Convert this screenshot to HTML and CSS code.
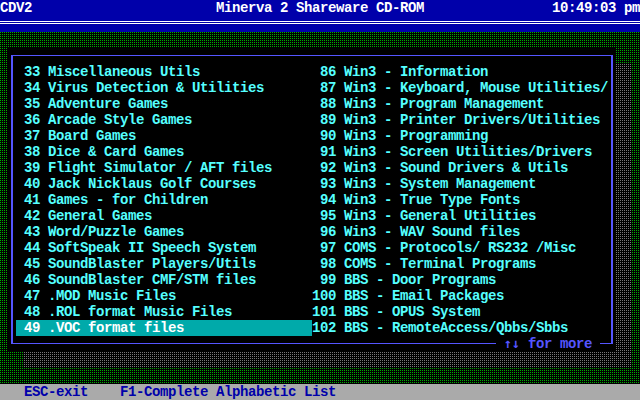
FILE: index.html
```html
<!DOCTYPE html>
<html lang="en">
<head>
<meta charset="utf-8">
<title>Minerva 2 Shareware CD-ROM</title>
<link rel="stylesheet" href="styles.css">
</head>
<body>
<div class="screen">
  <header class="titlebar">
    <span class="app">CDV2</span>
    <span class="title">Minerva 2 Shareware CD-ROM</span>
    <span class="clock">10:49:03 pm</span>
  </header>
  <div class="rule"></div>
  <main class="desktop">
    <section class="window">
      <div class="frame">
        <ul class="list">
          <li class="item"><span class="num">33</span><span class="label">Miscellaneous Utils</span></li>
          <li class="item"><span class="num">34</span><span class="label">Virus Detection &amp; Utilities</span></li>
          <li class="item"><span class="num">35</span><span class="label">Adventure Games</span></li>
          <li class="item"><span class="num">36</span><span class="label">Arcade Style Games</span></li>
          <li class="item"><span class="num">37</span><span class="label">Board Games</span></li>
          <li class="item"><span class="num">38</span><span class="label">Dice &amp; Card Games</span></li>
          <li class="item"><span class="num">39</span><span class="label">Flight Simulator / AFT files</span></li>
          <li class="item"><span class="num">40</span><span class="label">Jack Nicklaus Golf Courses</span></li>
          <li class="item"><span class="num">41</span><span class="label">Games - for Children</span></li>
          <li class="item"><span class="num">42</span><span class="label">General Games</span></li>
          <li class="item"><span class="num">43</span><span class="label">Word/Puzzle Games</span></li>
          <li class="item"><span class="num">44</span><span class="label">SoftSpeak II Speech System</span></li>
          <li class="item"><span class="num">45</span><span class="label">SoundBlaster Players/Utils</span></li>
          <li class="item"><span class="num">46</span><span class="label">SoundBlaster CMF/STM files</span></li>
          <li class="item"><span class="num">47</span><span class="label">.MOD Music Files</span></li>
          <li class="item"><span class="num">48</span><span class="label">.ROL format Music Files</span></li>
          <li class="item sel"><span class="num">49</span><span class="label">.VOC format files</span></li>
          <li class="item"><span class="num">86</span><span class="label">Win3 - Information</span></li>
          <li class="item"><span class="num">87</span><span class="label">Win3 - Keyboard, Mouse Utilities/</span></li>
          <li class="item"><span class="num">88</span><span class="label">Win3 - Program Management</span></li>
          <li class="item"><span class="num">89</span><span class="label">Win3 - Printer Drivers/Utilities</span></li>
          <li class="item"><span class="num">90</span><span class="label">Win3 - Programming</span></li>
          <li class="item"><span class="num">91</span><span class="label">Win3 - Screen Utilities/Drivers</span></li>
          <li class="item"><span class="num">92</span><span class="label">Win3 - Sound Drivers &amp; Utils</span></li>
          <li class="item"><span class="num">93</span><span class="label">Win3 - System Management</span></li>
          <li class="item"><span class="num">94</span><span class="label">Win3 - True Type Fonts</span></li>
          <li class="item"><span class="num">95</span><span class="label">Win3 - General Utilities</span></li>
          <li class="item"><span class="num">96</span><span class="label">Win3 - WAV Sound files</span></li>
          <li class="item"><span class="num">97</span><span class="label">COMS - Protocols/ RS232 /Misc</span></li>
          <li class="item"><span class="num">98</span><span class="label">COMS - Terminal Programs</span></li>
          <li class="item"><span class="num">99</span><span class="label">BBS - Door Programs</span></li>
          <li class="item"><span class="num">100</span><span class="label">BBS - Email Packages</span></li>
          <li class="item"><span class="num">101</span><span class="label">BBS - OPUS System</span></li>
          <li class="item"><span class="num">102</span><span class="label">BBS - RemoteAccess/Qbbs/Sbbs</span></li>
        </ul>
        <div class="more"><span class="arrows">↑↓</span><span class="more-text"> for more</span></div>
      </div>
    </section>
  </main>
  <footer class="keys">
    <span>ESC-exit</span>
    <span>F1-Complete Alphabetic List</span>
  </footer>
</div>
</body>
</html>
```
FILE: styles.css
```css
html, body {
  margin: 0;
  padding: 0;
  background: #000;
}

.screen {
  width: 640px;
  height: 400px;
  overflow: hidden;
  font-family: "Liberation Mono", "DejaVu Sans Mono", monospace;
  font-size: 14px;
  letter-spacing: -0.4px;
  font-weight: bold;
  line-height: 16px;
}

.titlebar {
  height: 16px;
  background: #0000aa;
  color: #ffffff;
  display: grid;
  grid-template-columns: 1fr auto 1fr;
}

.titlebar .clock {
  justify-self: end;
}

.rule {
  height: 16px;
  box-sizing: border-box;
  background: #0000aa;
  padding-top: 5px;
}

.rule::before {
  content: "";
  display: block;
  height: 1px;
  border-top: 1px solid #ffffff;
  border-bottom: 1px solid #ffffff;
}

.desktop {
  position: relative;
  z-index: 0;
  display: block;
  height: 352px;
  box-sizing: border-box;
  padding: 16px 0 0 8px;
  background-color: #00aa00;
  background-image:
    repeating-linear-gradient(to right, transparent 0 1px, #000 1px 2px),
    repeating-linear-gradient(to bottom, transparent 0 1px, #000 1px 2px);
}

.window {
  position: relative;
  width: 608px;
  height: 304px;
  box-sizing: border-box;
  padding: 7px 3px 8px 3px;
  background: #000;
}

.window::before {
  content: "";
  position: absolute;
  left: 16px;
  top: 16px;
  width: 100%;
  height: 100%;
  z-index: -1;
  background-color: #777777;
  background-image:
    repeating-linear-gradient(to right, transparent 0 1px, #000 1px 2px),
    repeating-linear-gradient(to bottom, transparent 0 1px, #000 1px 2px);
}

.frame {
  position: relative;
  height: 100%;
  box-sizing: border-box;
  border-style: solid;
  border-color: #5555ff;
  border-width: 1px 2px;
  padding: 8px 3px 7px 3px;
}

.list {
  margin: 0;
  padding: 0;
  list-style: none;
  display: grid;
  grid-template-columns: 296px 296px;
  grid-template-rows: repeat(17, 16px);
  grid-auto-flow: column;
}

.item {
  display: flex;
  height: 16px;
  color: #55ffff;
  white-space: pre;
}

.item .num {
  width: 24px;
  text-align: right;
}

.item .label {
  margin-left: 8px;
}

.item.sel {
  background: #00aaaa;
  color: #ffffff;
}

.more {
  position: absolute;
  right: 11px;
  bottom: -9px;
  height: 16px;
  padding: 0 8px;
  background: #000;
  color: #5555ff;
  display: flex;
  white-space: pre;
}

.more .arrows {
  width: 16px;
  font-family: "DejaVu Sans Mono", monospace;
  font-size: 13.3px;
  letter-spacing: 0;
}

.keys {
  height: 16px;
  background: #aaaaaa;
  color: #0000aa;
  display: flex;
  gap: 32px;
  padding-left: 24px;
}
```
